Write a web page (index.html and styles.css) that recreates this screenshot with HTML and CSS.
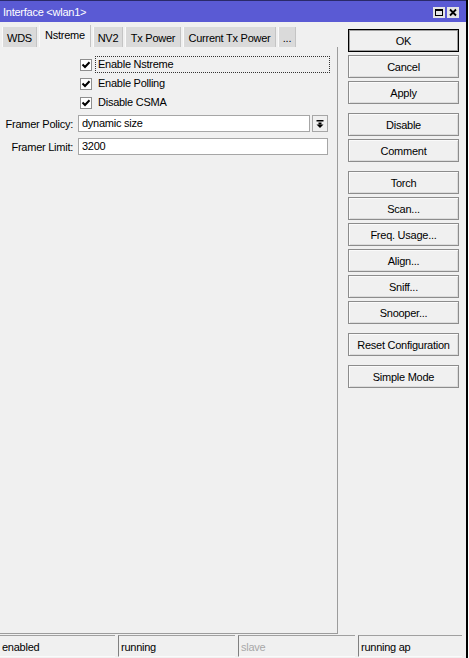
FILE: index.html
```html
<!DOCTYPE html>
<html>
<head>
<meta charset="utf-8">
<link rel="stylesheet" href="styles.css">
</head>
<body>
<div class="window">
  <div class="titlebar">
    <span class="title">Interface &lt;wlan1&gt;</span>
    <div class="tb-buttons">
      <span class="tb-btn"><svg width="12" height="11" viewBox="0 0 12 11"><rect x="2.5" y="2.5" width="7" height="6" fill="none" stroke="#000" stroke-width="1"/><rect x="2" y="2" width="8" height="2" fill="#000"/></svg></span>
      <span class="tb-btn"><svg width="12" height="11" viewBox="0 0 12 11"><path d="M3 2.5 L9 8.5 M9 2.5 L3 8.5" stroke="#000" stroke-width="1.8"/></svg></span>
    </div>
  </div>
  <div class="main">
    <div class="left">
      <div class="tabs">
        <div class="tab w-wds">WDS</div>
        <div class="tab active w-nst">Nstreme</div>
        <div class="tab w-nv2">NV2</div>
        <div class="tab w-txp">Tx Power</div>
        <div class="tab w-ctx">Current Tx Power</div>
        <div class="tab w-more">...</div>
      </div>
      <div class="panel">
        <div class="checks">
          <div class="check-row">
            <span class="cbox"><svg width="10" height="10" viewBox="0 0 10 10"><path d="M1.5 4.5 L4 7 L8.5 2.2" fill="none" stroke="#000" stroke-width="2"/></svg></span>
            <span class="clabel focused">Enable Nstreme</span>
          </div>
          <div class="check-row">
            <span class="cbox"><svg width="10" height="10" viewBox="0 0 10 10"><path d="M1.5 4.5 L4 7 L8.5 2.2" fill="none" stroke="#000" stroke-width="2"/></svg></span>
            <span class="clabel">Enable Polling</span>
          </div>
          <div class="check-row">
            <span class="cbox"><svg width="10" height="10" viewBox="0 0 10 10"><path d="M1.5 4.5 L4 7 L8.5 2.2" fill="none" stroke="#000" stroke-width="2"/></svg></span>
            <span class="clabel">Disable CSMA</span>
          </div>
        </div>
        <div class="form">
          <label class="flabel">Framer Policy:</label>
          <div class="select-row">
            <div class="field grow">dynamic size</div>
            <div class="dd-btn"><svg width="8" height="8" viewBox="0 0 8 8"><rect x="0.5" y="0" width="7" height="1.5" fill="#000"/><rect x="2.5" y="2.5" width="3" height="2" fill="#000"/><path d="M0.5 4.5 L7.5 4.5 L4 8 Z" fill="#000"/></svg></div>
          </div>
          <label class="flabel">Framer Limit:</label>
          <div class="field">3200</div>
        </div>
      </div>
    </div>
    <div class="right">
      <div class="group">
        <div class="btn default">OK</div>
        <div class="btn">Cancel</div>
        <div class="btn">Apply</div>
      </div>
      <div class="group">
        <div class="btn">Disable</div>
        <div class="btn">Comment</div>
      </div>
      <div class="group">
        <div class="btn">Torch</div>
        <div class="btn">Scan...</div>
        <div class="btn">Freq. Usage...</div>
        <div class="btn">Align...</div>
        <div class="btn">Sniff...</div>
        <div class="btn">Snooper...</div>
      </div>
      <div class="group">
        <div class="btn">Reset Configuration</div>
      </div>
      <div class="group">
        <div class="btn">Simple Mode</div>
      </div>
    </div>
  </div>
  <div class="statusbar">
    <div class="sfield first">enabled</div>
    <div class="sfield">running</div>
    <div class="sfield dim">slave</div>
    <div class="sfield">running ap</div>
  </div>
</div>
</body>
</html>
```

FILE: styles.css
```css
* { box-sizing: border-box; }
html, body {
  margin: 0;
  padding: 0;
  background: #fff;
}
body {
  width: 469px;
  height: 658px;
  overflow: hidden;
  font-family: "Liberation Sans", Arial, sans-serif;
  font-size: 11px;
  letter-spacing: -0.25px;
  color: #000;
}
.window {
  width: 468px;
  height: 658px;
  background: #f0f0f0;
  border-right: 2px solid #000;
  display: flex;
  flex-direction: column;
}
.titlebar {
  height: 22px;
  background: #5a5ad4;
  border-top: 1px solid #2a2a6a;
  display: flex;
  align-items: center;
  justify-content: space-between;
  padding: 0 7px 0 3px;
  color: #fff;
  flex: none;
}
.title {
  font-size: 11px;
  padding-top: 1px;
}
.tb-buttons {
  display: flex;
  gap: 2px;
  padding-top: 1px;
}
.tb-btn {
  width: 12px;
  height: 11px;
  background: #e4e4e4;
  display: block;
}
.tb-btn svg { display: block; }
.main {
  display: flex;
  height: 612px;
  flex: none;
}
.left {
  width: 338px;
  display: flex;
  flex-direction: column;
  padding-top: 3px;
}
.tabs {
  height: 22px;
  display: flex;
  align-items: flex-end;
  padding-left: 2px;
  gap: 2px;
}
.tab {
  height: 20px;
  background: #dadada;
  border-right: 1px solid #c4c4c4;
  border-left: 1px solid #fafafa;
  display: flex;
  align-items: center;
  justify-content: center;
  padding-top: 1px;
  font-size: 11px;
}
.tab.active {
  height: 22px;
  background: #f0f0f0;
  padding-top: 0;
  padding-bottom: 3px;
}
.w-wds { width: 35px; }
.w-nst { width: 52px; }
.w-nv2 { width: 30px; }
.w-txp { width: 56px; }
.w-ctx { width: 93px; }
.w-more { width: 18px; }
.panel {
  height: 587px;
  background: #f0f0f0;
  border-right: 1px solid #9c9c9c;
  border-bottom: 1px solid #9c9c9c;
  padding-top: 8px;
}
.checks {
  padding-left: 80px;
  display: flex;
  flex-direction: column;
}
.check-row {
  height: 19px;
  display: flex;
  align-items: center;
}
.cbox {
  width: 12px;
  height: 12px;
  background: #fff;
  border: 1px solid #8e8e8e;
  display: flex;
  align-items: center;
  justify-content: center;
  flex: none;
}
.cbox svg { display: block; }
.clabel {
  margin-left: 3px;
  padding: 1px 2px;
  border: 1px solid transparent;
  line-height: 13px;
}
.clabel.focused {
  border: 1px dotted #333;
  width: 235px;
}
.form {
  display: grid;
  grid-template-columns: 73px 250px;
  column-gap: 5px;
  row-gap: 6px;
  margin-top: 3px;
  align-items: center;
}
.flabel {
  text-align: right;
  white-space: nowrap;
}
.select-row {
  display: flex;
  gap: 2px;
}
.field {
  height: 17px;
  background: #fff;
  border: 1px solid #a6a6a6;
  padding: 0 3px;
  line-height: 15px;
}
.grow { flex: 1; }
.dd-btn {
  width: 16px;
  height: 17px;
  background: #f0f0f0;
  border: 1px solid #a6a6a6;
  display: flex;
  align-items: center;
  justify-content: center;
}
.dd-btn svg { display: block; }
.right {
  margin-left: 10px;
  padding-top: 7px;
  width: 111px;
  display: flex;
  flex-direction: column;
  gap: 9px;
}
.group {
  display: flex;
  flex-direction: column;
  gap: 3px;
}
.btn {
  height: 23px;
  background: #f0f0f0;
  border: 1px solid #8c8c8c;
  box-shadow: inset 1px 1px 0 #fafafa, inset -1px -1px 0 #dcdcdc;
  display: flex;
  align-items: center;
  justify-content: center;
  font-size: 11px;
  white-space: nowrap;
}
.btn.default {
  border: 1px solid #000;
  box-shadow: inset 0 0 0 1px #a0a0a0;
}
.statusbar {
  margin-top: 1px;
  height: 22px;
  display: grid;
  grid-template-columns: 115px 117px 117px 104px;
  column-gap: 3px;
  flex: none;
}
.sfield {
  border-top: 1px solid #a0a0a0;
  border-left: 1px solid #808080;
  border-bottom: 1px solid #fafafa;
  padding-left: 2px;
  display: flex;
  align-items: center;
  padding-top: 1px;
}
.sfield.first {
  border-left: none;
}
.sfield.dim {
  color: #a8a8a8;
}
```
